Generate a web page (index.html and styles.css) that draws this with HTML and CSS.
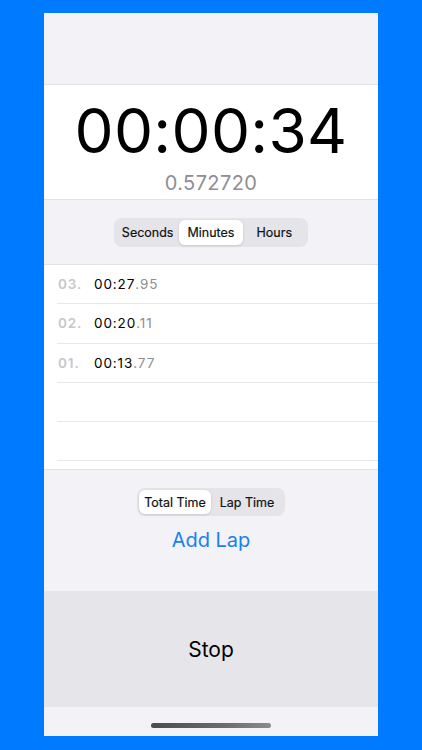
FILE: index.html
```html
<!DOCTYPE html>
<html>
<head>
<meta charset="utf-8">
<link rel="stylesheet" href="styles.css">
</head>
<body>
<div class="screen">
  <div class="top"></div>
  <div class="timer">
    <div class="big">00:00:34</div>
    <div class="small">0.572720</div>
  </div>
  <div class="units">
    <div class="seg seg3">
      <div class="opt">Seconds</div>
      <div class="opt sel">Minutes</div>
      <div class="opt">Hours</div>
    </div>
  </div>
  <div class="laps">
    <div class="row"><span class="num">03.</span><span class="t">00:27</span><span class="f">.95</span></div>
    <div class="row"><span class="num">02.</span><span class="t">00:20</span><span class="f">.11</span></div>
    <div class="row"><span class="num">01.</span><span class="t">00:13</span><span class="f">.77</span></div>
    <div class="row"></div>
    <div class="row"></div>
  </div>
  <div class="controls">
    <div class="seg seg2">
      <div class="opt sel">Total Time</div>
      <div class="opt">Lap Time</div>
    </div>
    <div class="addlap">Add Lap</div>
  </div>
  <div class="stop">Stop</div>
  <div class="home"><div class="bar"></div></div>
</div>
</body>
</html>
```
FILE: styles.css
```css
html, body {
  margin: 0;
  padding: 0;
}
body {
  width: 422px;
  height: 750px;
  background: #007aff;
  font-family: Inter, "Noto Sans", sans-serif;
  overflow: hidden;
}
.screen {
  margin: 13px 0 0 44px;
  width: 334px;
  height: 723px;
  background: #f2f2f7;
  display: flex;
  flex-direction: column;
}
.top {
  height: 71px;
  border-bottom: 1px solid #e1e1e6;
  flex: none;
}
.timer {
  height: 115px;
  background: #fff;
  border-bottom: 1px solid #e1e1e6;
  flex: none;
  display: flex;
  flex-direction: column;
  align-items: center;
  box-sizing: border-box;
  padding-top: 15px;
}
.big {
  font-size: 62px;
  line-height: 62px;
  color: #000;
  letter-spacing: 0.3px;
}
.small {
  margin-top: 11px;
  font-size: 20px;
  line-height: 20px;
  color: #8e8e93;
  letter-spacing: 0.4px;
}
.units {
  height: 64px;
  border-bottom: 1px solid #e1e1e6;
  flex: none;
  display: flex;
  align-items: center;
  justify-content: center;
}
.seg {
  display: flex;
  background: #e4e4e9;
  border-radius: 8px;
  padding: 2px;
  box-sizing: border-box;
}
.seg3 {
  width: 194px;
  height: 29px;
}
.seg2 {
  width: 148px;
  height: 28px;
}
.opt {
  flex: 1;
  display: flex;
  align-items: center;
  justify-content: center;
  font-size: 12.5px;
  font-weight: 400;
  color: #111;
  border-radius: 6px;
  -webkit-text-stroke: 0.2px #111;
}
.opt.sel {
  background: #fff;
  box-shadow: 0 1px 3px rgba(0,0,0,0.12);
}
.laps {
  height: 205px;
  background: #fff;
  border-bottom: 1px solid #e1e1e6;
  flex: none;
  box-sizing: border-box;
}
.row {
  height: 39.3px;
  margin-left: 13px;
  border-bottom: 1px solid #e8e8ec;
  box-sizing: border-box;
  display: flex;
  align-items: center;
  font-size: 13.5px;
  letter-spacing: 0.9px;
}
.num {
  color: #c7c7cc;
  font-weight: 600;
  width: 36px;
  padding-left: 1px;
}
.t {
  color: #000;
}
.f {
  color: #8e8e93;
}
.controls {
  height: 121px;
  flex: none;
  display: flex;
  flex-direction: column;
  align-items: center;
  box-sizing: border-box;
  padding-top: 18px;
}
.addlap {
  margin-top: 12px;
  font-size: 20px;
  line-height: 24px;
  color: #1a80ee;
}
.stop {
  height: 116px;
  flex: none;
  background: #e5e5ea;
  display: flex;
  align-items: center;
  justify-content: center;
  font-size: 21px;
  color: #000;
}
.home {
  flex: 1;
  display: flex;
  justify-content: center;
  align-items: flex-end;
  padding-bottom: 8px;
}
.bar {
  width: 120px;
  height: 5px;
  border-radius: 3px;
  background: linear-gradient(90deg, #4a4a4f, #6a6a6f 60%, #8a8a8f);
}
```
